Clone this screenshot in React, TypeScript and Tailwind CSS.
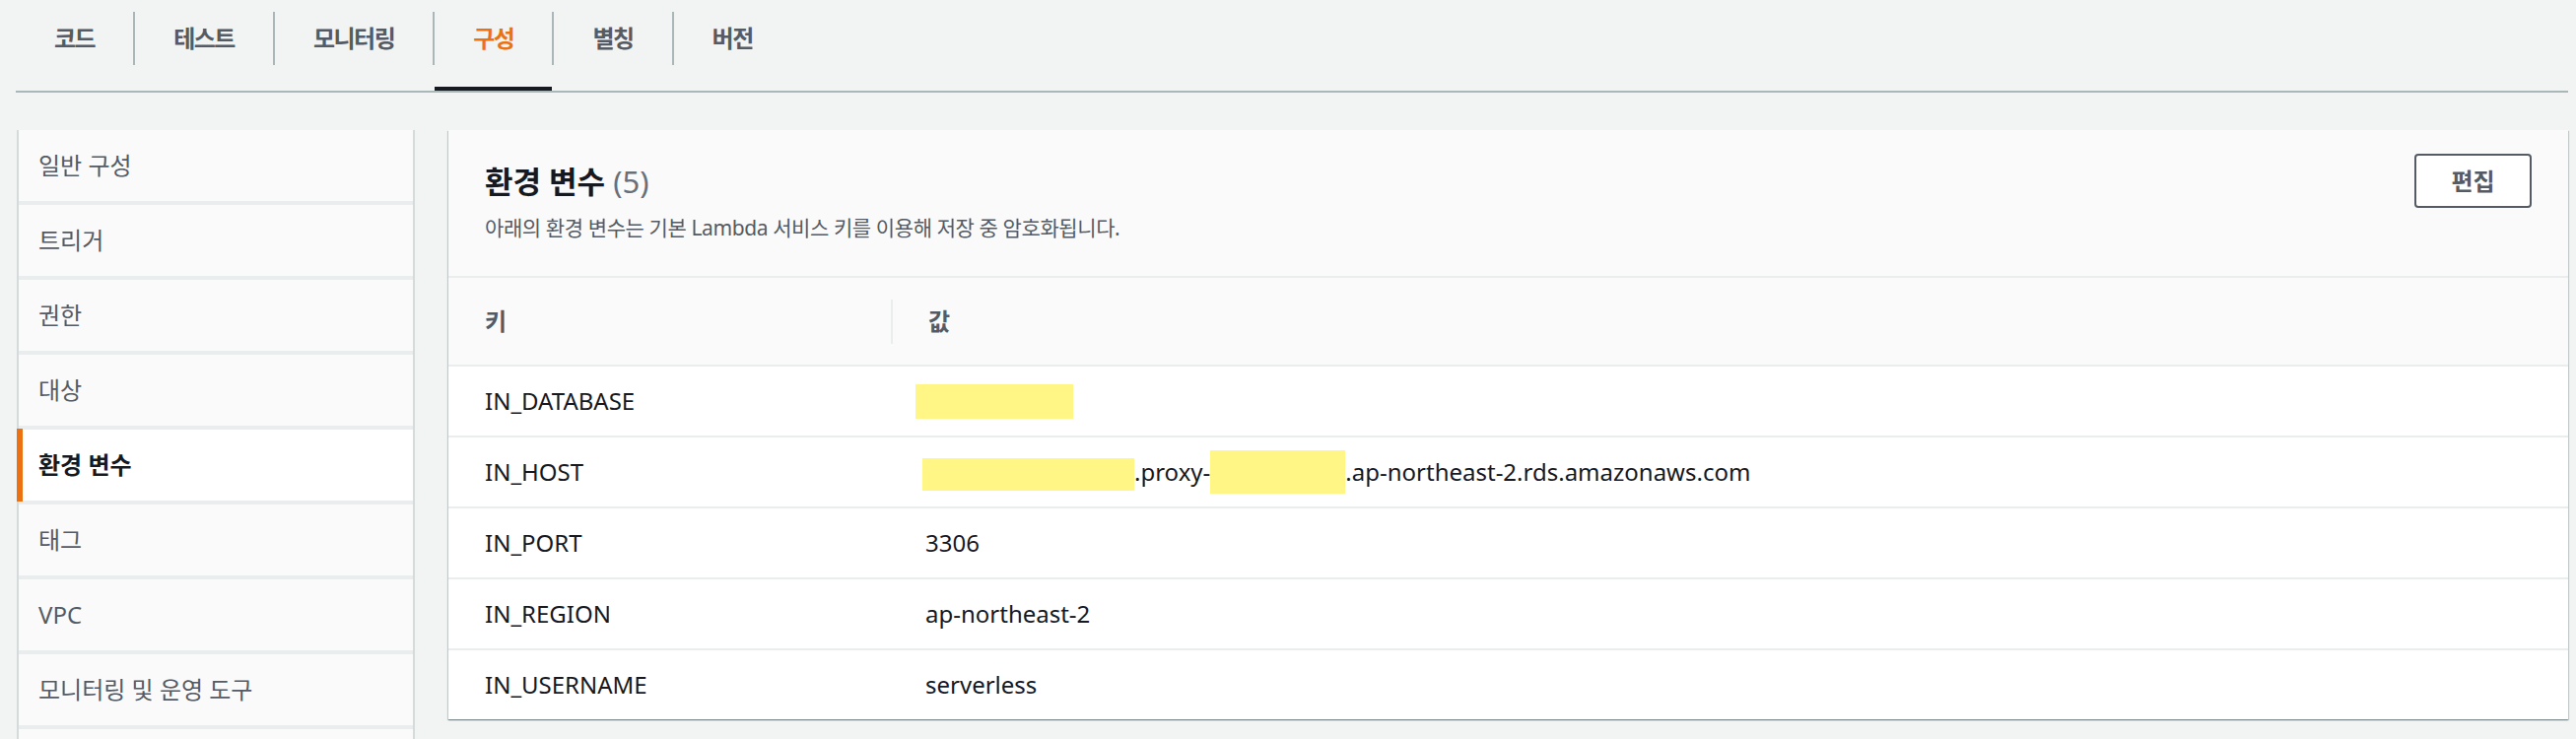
import React from "react";

const tabs = ["코드", "테스트", "모니터링", "구성", "별칭", "버전"];
const sideItems = [
  "일반 구성",
  "트리거",
  "권한",
  "대상",
  "환경 변수",
  "태그",
  "VPC",
  "모니터링 및 운영 도구",
  "",
];

function Hl({ className }: { className: string }) {
  return <span className={"inline-block shrink-0 bg-[#fff685] " + className} />;
}

export default function App() {
  const rows: { k: string; v: React.ReactNode }[] = [
    { k: "IN_DATABASE", v: <Hl className="ml-[-10px] h-[35px] w-[160px]" /> },
    {
      k: "IN_HOST",
      v: (
        <>
          <Hl className="ml-[-3px] mt-[5px] h-[33px] w-[215px]" />
          <span>.proxy-</span>
          <Hl className="h-[44px] w-[137px]" />
          <span>.ap-northeast-2.rds.amazonaws.com</span>
        </>
      ),
    },
    { k: "IN_PORT", v: "3306" },
    { k: "IN_REGION", v: "ap-northeast-2" },
    { k: "IN_USERNAME", v: "serverless" },
  ];

  return (
    <div className="h-[750px] w-full overflow-hidden bg-[#f2f3f3] pl-[16px] pr-[8px] font-['Noto_Sans','Noto_Sans_CJK_KR',sans-serif]">
      {/* Tabs */}
      <div className="flex h-[94px] border-b-2 border-[#aab7b8]">
        {tabs.map((t, i) => {
          const active = t === "구성";
          return (
            <div key={t} className="relative flex h-[92px] flex-col">
              <div
                className={
                  "mt-[12px] flex h-[54px] items-center px-[39px] text-[24px] font-bold tracking-[-1.5px] " +
                  (i > 0 ? "border-l-2 border-[#aab7b8] " : "") +
                  (active ? "text-[#ec7211]" : "text-[#545b64]")
                }
              >
                {t}
              </div>
              {active && (
                <div className="absolute bottom-0 left-[2px] right-0 h-[4px] bg-[#16191f]" />
              )}
            </div>
          );
        })}
      </div>

      {/* Body */}
      <div className="mt-[38px] flex items-start gap-[34px]">
        {/* Sidebar */}
        <div className="ml-px flex w-[404px] shrink-0 flex-col gap-[4px] border-x-2 border-[#d5dbdb] bg-[#eaeded]">
          {sideItems.map((s, i) => {
            const active = s === "환경 변수";
            return (
              <div
                key={i}
                className={
                  "relative flex h-[72px] shrink-0 items-center pl-[20px] text-[24px] " +
                  (active
                    ? "bg-white font-bold text-[#16191f]"
                    : "bg-[#fafafa] text-[#545b64]")
                }
              >
                {active && (
                  <div className="absolute bottom-[-1px] left-[-2px] top-[-1px] w-[6px] bg-[#ec7211]" />
                )}
                {s}
              </div>
            );
          })}
        </div>

        {/* Main panel */}
        <div className="flex-1 bg-white shadow-[0_1px_1px_0_rgba(0,28,36,0.3),1px_1px_1px_0_rgba(0,28,36,0.15),-1px_1px_1px_0_rgba(0,28,36,0.15)]">
          <div className="flex h-[150px] justify-between border-b-2 border-[#eaeded] bg-[#fafafa] px-[37px]">
            <div className="pt-[32px]">
              <h2 className="text-[31px] font-bold leading-[40px] text-[#16191f]">
                환경 변수 <span className="font-normal text-[#687078]">(5)</span>
              </h2>
              <p className="mt-[12px] text-[21px] leading-[30px] tracking-[-0.4px] text-[#545b64]">
                아래의 환경 변수는 기본 Lambda 서비스 키를 이용해 저장 중 암호화됩니다.
              </p>
            </div>
            <button className="mt-[24px] h-[55px] w-[119px] rounded-[4px] border-2 border-[#545b64] bg-white text-[24px] font-bold text-[#545b64]">
              편집
            </button>
          </div>

          <div className="grid h-[90px] grid-cols-[449px_1fr] border-b-2 border-[#eaeded] bg-[#fafafa] text-[24px] font-bold text-[#545b64]">
            <div className="flex items-center pl-[37px]">키</div>
            <div className="flex items-center">
              <div className="h-[45px] w-[2px] bg-[#eaeded]" />
              <span className="ml-[36px]">값</span>
            </div>
          </div>

          {rows.map((r, i) => (
            <div
              key={r.k}
              className={
                "grid grid-cols-[449px_1fr] text-[24px] text-[#16191f] " +
                (i < rows.length - 1 ? "h-[72px] border-b-2 border-[#eaeded]" : "h-[70px]")
              }
            >
              <div className="flex items-center pl-[37px]">{r.k}</div>
              <div className="flex items-center pl-[35px]">{r.v}</div>
            </div>
          ))}
        </div>
      </div>
    </div>
  );
}
